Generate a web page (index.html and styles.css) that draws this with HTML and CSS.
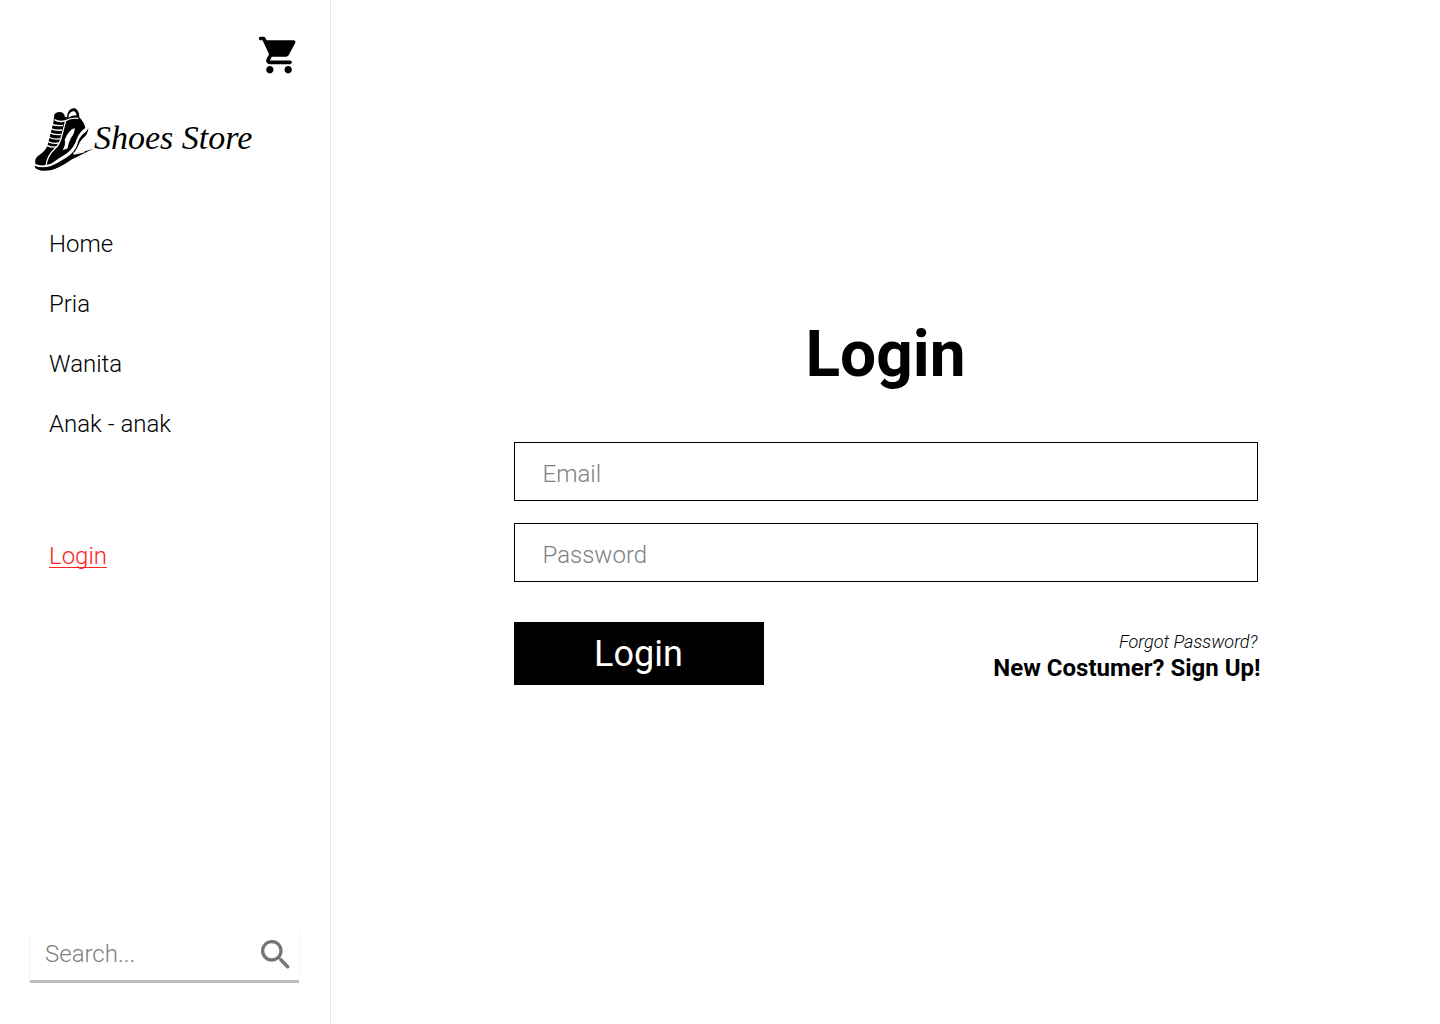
FILE: index.html
```html
<!DOCTYPE html>
<html lang="id">
<head>
<meta charset="utf-8">
<meta name="viewport" content="width=device-width, initial-scale=1">
<title>Login - Shoes Store</title>
<link rel="stylesheet" href="styles.css">
</head>
<body>
<div class="page">
  <aside class="sidebar">
    <a class="cart" href="#cart" aria-label="Cart">
      <svg class="cart-icon" viewBox="0 0 24 24" aria-hidden="true"><path d="M7 18c-1.1 0-1.99.9-1.99 2S5.9 22 7 22s2-.9 2-2-.9-2-2-2zM1 3c0 .55.45 1 1 1h1l3.6 7.59-1.35 2.44C4.52 15.37 5.48 17 7 17h11c.55 0 1-.45 1-1s-.45-1-1-1H7l1.1-2h7.45c.75 0 1.41-.41 1.75-1.03l3.58-6.49c.37-.66-.11-1.48-.87-1.48H5.21l-.67-1.43c-.16-.35-.52-.57-.9-.57H2c-.55 0-1 .45-1 1zm16 15c-1.1 0-1.99.9-1.99 2s.89 2 1.99 2 2-.9 2-2-.9-2-2-2z"/></svg>
    </a>
    <a class="brand" href="#home">
      <svg class="brand-mark" viewBox="27 21 180 198" aria-hidden="true">
        <path d="M88 44Q92 36 104 36Q117 37 119 48Q122 54 126 50Q128 26 148 24Q163 30 163 52Q178 68 181 84Q164 94 155 118Q148 142 126 160Q100 176 78 191Q52 201 31 192Q27 174 44 164Q60 154 67 138L85 68Z"/>
        <path class="cut" d="M130 53Q131 35 147 33Q155 38 155 46Q142 46 130 53Z"/>
        <path class="line" d="M88 59Q104 68 122 62Q140 52 160 55M122 62Q116 86 110 108Q104 134 88 148Q68 166 63 196"/>
        <path class="line" d="M77 72Q96 79 114 76M76 85Q92 93 111 90M73 98Q90 106 108 103M70 111Q87 120 105 116M67 124Q83 133 101 129M64 136Q80 143 93 141"/>
        <path class="cut" d="M119 119Q130 91 149 84Q150 98 138 114Q130 128 128 145L113 151Q123 132 119 119Z"/>
        <path d="M190 84Q190 102 174 115Q163 125 158 141Q153 153 143 161Q172 158 205 146Q168 164 141 178Q105 204 77 211Q44 216 31 204Q29 201 29 197Q48 206 76 199Q98 190 121 175Q148 159 156 136Q162 110 178 99Q187 93 190 84Z"/>
        <path class="line" d="M146 162Q162 160 178 155"/>
      </svg>
      <span class="brand-name">Shoes Store</span>
    </a>
    <nav class="menu" aria-label="Main">
      <a href="#home">Home</a>
      <a href="#pria">Pria</a>
      <a href="#wanita">Wanita</a>
      <a href="#anak">Anak - anak</a>
      <a class="current" href="#login" aria-current="page">Login</a>
    </nav>
    <form class="search" role="search">
      <input class="search-input" type="search" placeholder="Search..." aria-label="Search">
      <button class="search-button" type="submit" aria-label="Search">
        <svg class="search-icon" viewBox="0 0 24 24" aria-hidden="true"><path d="M15.5 14h-.79l-.28-.27c1.2-1.4 1.82-3.31 1.48-5.34-.47-2.78-2.79-5-5.59-5.34-4.23-.52-7.79 3.04-7.27 7.27.34 2.8 2.56 5.12 5.34 5.59 2.03.34 3.94-.28 5.34-1.48l.27.28v.79l4.25 4.25c.41.41 1.08.41 1.49 0 .41-.41.41-1.08 0-1.49L15.5 14zm-6 0C7.01 14 5 11.99 5 9.5S7.01 5 9.5 5 14 7.01 14 9.5 11.99 14 9.5 14z"/></svg>
      </button>
    </form>
  </aside>
  <main class="content">
    <form class="login">
      <h1 class="title">Login</h1>
      <div class="fields">
        <input class="field" type="email" placeholder="Email" aria-label="Email">
        <input class="field" type="password" placeholder="Password" aria-label="Password">
      </div>
      <div class="actions">
        <button class="submit" type="submit">Login</button>
        <div class="links">
          <a class="forgot" href="#forgot">Forgot Password?</a>
          <a class="signup" href="#signup">New Costumer? Sign Up!</a>
        </div>
      </div>
    </form>
  </main>
</div>
</body>
</html>
```
FILE: styles.css
```css
* {
  box-sizing: border-box;
}

body {
  margin: 0;
  background: #fff;
  color: #000;
  font-family: Roboto, sans-serif;
  font-size: 24px;
  font-weight: 300;
  line-height: 28px;
}

a {
  color: inherit;
  text-decoration: none;
}

input,
button {
  font: inherit;
  border: 0;
  border-radius: 0;
  background: none;
}

input::placeholder {
  color: #808080;
  opacity: 1;
}

svg {
  display: block;
}

.page {
  display: flex;
  min-height: 100vh;
}

.sidebar {
  display: flex;
  flex-direction: column;
  flex: 0 0 331px;
  min-width: 0;
  padding: 33px 31px 41px 30px;
  border-right: 1px solid #e5e5e5;
}

.cart {
  align-self: flex-end;
  margin-right: -2px;
}

.cart-icon {
  width: 44px;
  height: 44px;
}

.brand {
  display: flex;
  align-items: center;
  margin-top: 30px;
  padding-left: 4px;
}

.brand-mark {
  width: 60px;
  height: 66px;
}

.brand-mark .cut {
  fill: #fff;
}

.brand-mark .line {
  fill: none;
  stroke: #fff;
  stroke-width: 4;
}

.brand-name {
  padding-bottom: 4px;
  font-family: "Liberation Serif", serif;
  font-size: 34px;
  font-style: italic;
  font-weight: 400;
  line-height: 36px;
  white-space: nowrap;
}

.menu {
  display: flex;
  flex-direction: column;
  align-items: flex-start;
  gap: 32px;
  margin-top: 57px;
  padding-left: 19px;
}

.menu .current {
  margin-top: 72px;
  color: #f22;
  text-decoration: underline;
  text-decoration-thickness: 1px;
  text-underline-offset: 3px;
  text-decoration-skip-ink: none;
}

.search {
  display: flex;
  align-items: center;
  height: 52px;
  margin-top: auto;
  border-bottom: 3px solid #bdbdbd;
  box-shadow: -1px 0 #f4f4f4, 1px 0 #f4f4f4;
}

.search-input {
  flex: 1;
  min-width: 0;
  height: 49px;
  padding: 0 0 4px 15px;
}

.search-button {
  padding: 0 0 2px;
  margin-right: 3px;
}

.search-icon {
  width: 40px;
  height: 40px;
  fill: #757575;
}

.content {
  display: flex;
  flex: 1;
  align-items: center;
  justify-content: center;
  padding: 0 24px 22px;
}

.login {
  flex: 0 1 744px;
}

.title {
  margin: 0 0 50px;
  font-size: 64px;
  font-weight: 700;
  line-height: 74px;
  text-align: center;
}

.fields {
  display: flex;
  flex-direction: column;
  gap: 22px;
}

.field {
  width: 100%;
  height: 59px;
  padding: 5px 28px 0;
  border: 1px solid #000;
}

.actions {
  display: flex;
  justify-content: space-between;
  margin-top: 40px;
}

.submit {
  width: 250px;
  height: 63px;
  padding: 2px 0 0;
  background: #000;
  color: #fff;
  font-size: 36px;
  font-weight: 400;
}

.links {
  display: flex;
  flex-direction: column;
  align-items: flex-end;
  gap: 2px;
  margin: 9px -3px 0 0;
}

.forgot {
  padding-right: 3px;
  font-size: 18px;
  font-style: italic;
  line-height: 21px;
}

.signup {
  font-weight: 700;
}
```
